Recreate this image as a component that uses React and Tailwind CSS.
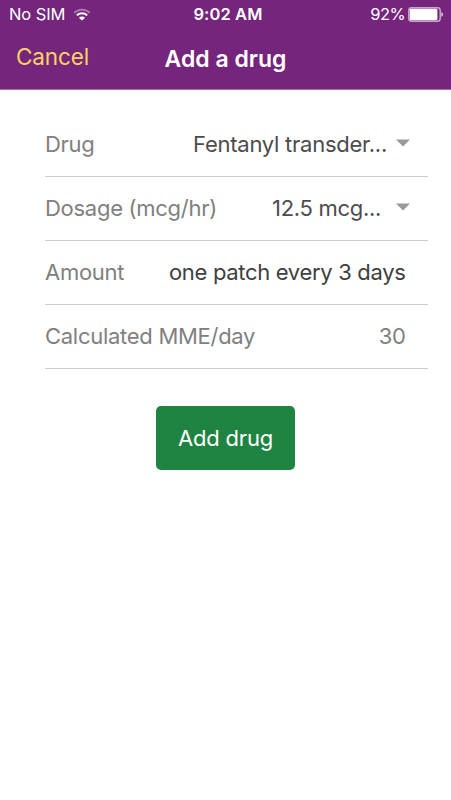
import { useState } from 'react';

const ROWS = [
  {
    label: 'Drug',
    value: 'Fentanyl transder...',
    select: true,
    valueClass: 'text-[#4c4c4c] mr-[9px] tracking-[-0.25px]',
  },
  {
    label: 'Dosage (mcg/hr)',
    value: '12.5 mcg...',
    select: true,
    valueClass: 'text-[#4c4c4c] mr-[15px] tracking-[-0.3px]',
  },
  {
    label: 'Amount',
    value: 'one patch every 3 days',
    valueClass: 'text-[#404040] tracking-[-0.32px]',
  },
  {
    label: 'Calculated MME/day',
    value: '30',
    valueClass: 'text-[#808080] tracking-[-0.32px]',
  },
];

function WifiIcon() {
  return (
    <svg width="18" height="14" viewBox="0 0 18 14" fill="none" stroke="#fff">
      <path d="M1.2 4.9 A11 11 0 0 1 16.8 4.9" strokeWidth="1.9" opacity="0.4" />
      <path d="M3.8 7.4 A7.4 7.4 0 0 1 14.2 7.4" strokeWidth="1.9" />
      <path d="M9 12.6 L5.9 9.7 A4.4 4.4 0 0 1 12.1 9.7 Z" fill="#fff" stroke="none" />
    </svg>
  );
}

function BatteryIcon() {
  return (
    <svg width="36" height="15" viewBox="0 0 36 15" fill="none">
      <rect x="0.8" y="0.8" width="31.4" height="13.4" rx="2.6" stroke="#fff" strokeOpacity="0.6" strokeWidth="1.5" />
      <rect x="1.8" y="1.8" width="27.6" height="11.4" rx="1.2" fill="#fff" />
      <path d="M33.4 5 a2.6 2.6 0 0 1 0 4.8 Z" fill="#fff" fillOpacity="0.8" />
    </svg>
  );
}

function StatusBar() {
  return (
    <div className="grid h-[29px] grid-cols-3 items-center pl-[9px] pr-[7px] text-[16.5px] leading-[29px]">
      <div className="flex items-center gap-[8px]">
        <span className="tracking-[-0.1px]">No SIM</span>
        <WifiIcon />
      </div>
      <span className="pl-[3px] text-center font-semibold tracking-[0.1px]">9:02 AM</span>
      <div className="flex items-center justify-end gap-[3px]">
        <span className="tracking-[-0.6px]">92%</span>
        <BatteryIcon />
      </div>
    </div>
  );
}

function FormRow({ row }) {
  return (
    <div className="flex h-16 items-center border-b border-[#ccc] text-[22px]">
      <span className="flex-1 whitespace-nowrap tracking-[-0.28px] text-[#808080]">{row.label}</span>
      <span className={`whitespace-nowrap ${row.valueClass}`}>{row.value}</span>
      {row.select ? (
        <svg className="-mt-[3px] mr-[18px]" width="14" height="8" viewBox="0 0 14 8">
          <path d="M0 0.5 H14 L7 7.5 Z" fill="#999" />
        </svg>
      ) : (
        <span className="w-[22.5px]" />
      )}
    </div>
  );
}

export default function App() {
  const [rows] = useState(ROWS);

  return (
    <div className="h-[800px] w-[451px] overflow-hidden bg-white font-['Inter',sans-serif]">
      <header className="h-[90px] border-b border-[#a56ba8] bg-[#75257b] text-white">
        <StatusBar />
        <div className="grid grid-cols-[1fr_auto_1fr] items-center px-4 leading-[58px]">
          <button className="-mt-[3px] text-left text-[22.5px] tracking-[-0.1px] text-[#fbd266]">Cancel</button>
          <h1 className="pt-px text-[23px] font-semibold">Add a drug</h1>
          <span />
        </div>
      </header>

      <main className="pl-[45px] pr-[23px] pt-[23px]">
        {rows.map((row) => (
          <FormRow key={row.label} row={row} />
        ))}
      </main>

      <div className="flex justify-center pt-[37px]">
        <button className="h-[64px] w-[139px] rounded-[5px] bg-[#1f8442] pt-px text-[22px] tracking-[-0.2px] text-white">
          Add drug
        </button>
      </div>
    </div>
  );
}
